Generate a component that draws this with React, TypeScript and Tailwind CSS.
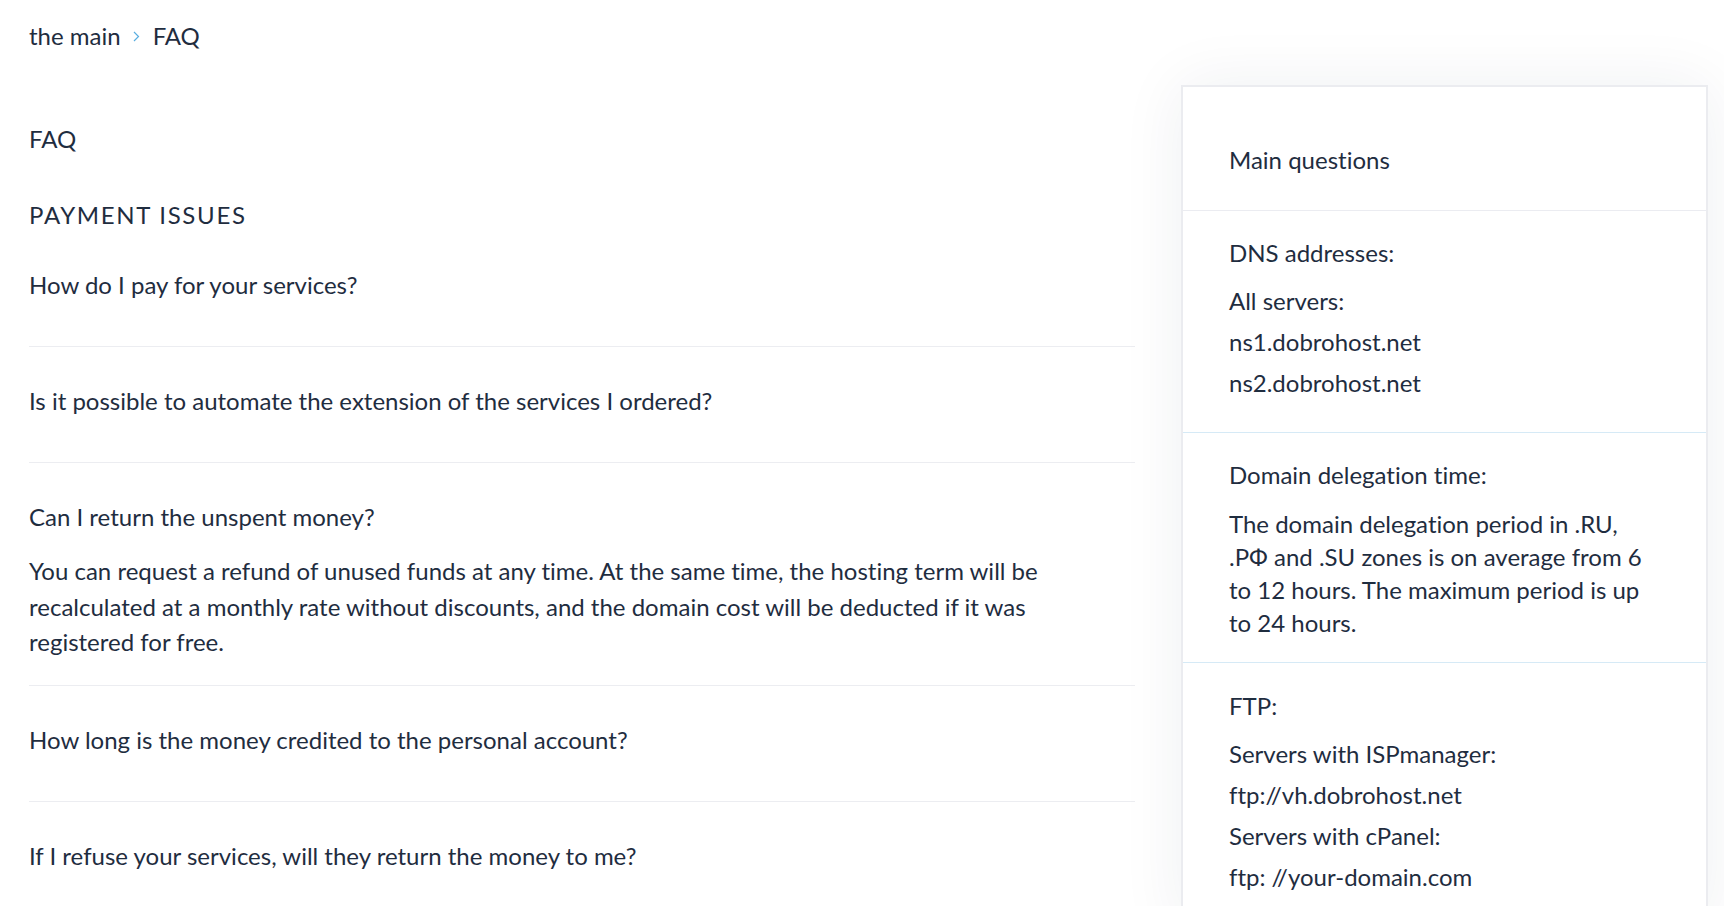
import type { FC } from 'react';

interface FaqItem {
  question: string;
  answer?: string;
}

const items: FaqItem[] = [
  { question: 'How do I pay for your services?' },
  { question: 'Is it possible to automate the extension of the services I ordered?' },
  {
    question: 'Can I return the unspent money?',
    answer:
      'You can request a refund of unused funds at any time. At the same time, the hosting term will be recalculated at a monthly rate without discounts, and the domain cost will be deducted if it was registered for free.',
  },
  { question: 'How long is the money credited to the personal account?' },
  { question: 'If I refuse your services, will they return the money to me?' },
];

const Chevron: FC = () => (
  <svg width="7" height="11" viewBox="0 0 7 11" fill="none" className="ml-[12px] mr-[13px]">
    <path d="M1 1l4.5 4.5L1 10" stroke="#5aaee0" strokeWidth="1.2" />
  </svg>
);

const FaqRow: FC<{ item: FaqItem; first?: boolean }> = ({ item, first }) => (
  <div className={`border-b border-[#ecedf1] pb-[25px] ${first ? 'pt-[34px]' : 'pt-[36px]'}`}>
    <div className="mb-[18px] leading-[36px]">{item.question}</div>
    {item.answer && <p className="leading-[35.5px]">{item.answer}</p>}
  </div>
);

const Sidebar: FC = () => (
  <aside className="w-[527px] shrink-0 border-2 border-[#ebecf0] bg-white shadow-[0_0_60px_rgba(30,40,70,0.07)] leading-[33px]">
    <div className="border-b border-[#ebecf1] px-[46px] pt-[56px] pb-[34px]">Main questions</div>
    <div className="border-b border-[#d6eaf6] px-[46px] pt-[25px] pb-[29px]">
      <div className="mb-[11px]">DNS addresses:</div>
      <p className="leading-[41px]">All servers:</p>
      <p className="leading-[41px]">ns1.dobrohost.net</p>
      <p className="leading-[41px]">ns2.dobrohost.net</p>
    </div>
    <div className="border-b border-[#d6eaf6] px-[46px] pt-[25px] pb-[23px]">
      <div className="mb-[16px]">Domain delegation time:</div>
      <p>
        The domain delegation period in .RU, .РФ and .SU zones is on average from 6 to 12 hours. The
        maximum period is up to 24 hours.
      </p>
    </div>
    <div className="px-[46px] pt-[26px] pb-[29px]">
      <div className="mb-[11px]">FTP:</div>
      <p className="leading-[41px]">Servers with ISPmanager:</p>
      <p className="leading-[41px]">ftp://vh.dobrohost.net</p>
      <p className="leading-[41px]">Servers with cPanel:</p>
      <p className="leading-[41px]">ftp: //your-domain.com</p>
    </div>
  </aside>
);

export default function App() {
  return (
    <div className="min-h-screen bg-white font-['Lato','Noto_Sans',sans-serif] text-[24px] text-[#1f2d3f] [font-variant-ligatures:none]">
      <div className="flex items-start gap-[46px] pl-[29px] pt-[18px]">
        <main className="w-[1106px] shrink-0">
          <nav className="flex items-center leading-[36px]">
            <span>the main</span>
            <Chevron />
            <span>FAQ</span>
          </nav>
          <h1 className="mt-[67px] leading-[36px]">FAQ</h1>
          <h2 className="mt-[40px] leading-[36px] tracking-[0.07em]">PAYMENT ISSUES</h2>
          <div>
            {items.map((item, i) => (
              <FaqRow key={item.question} item={item} first={i === 0} />
            ))}
          </div>
        </main>
        <div className="mt-[67px]">
          <Sidebar />
        </div>
      </div>
    </div>
  );
}
